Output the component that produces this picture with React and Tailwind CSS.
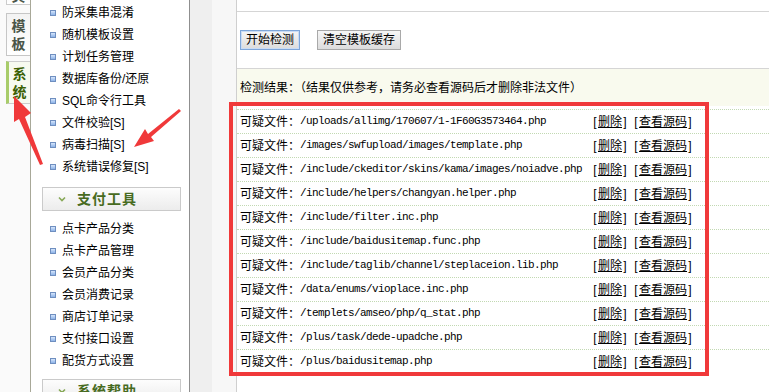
import React from "react";

const cjk = { fontFamily: '"Liberation Sans", "Noto Sans CJK SC", sans-serif' };
const mono = { fontFamily: '"Liberation Mono", "Noto Sans CJK SC", monospace' };

const sysItems = [
  "防采集串混淆",
  "随机模板设置",
  "计划任务管理",
  "数据库备份/还原",
  "SQL命令行工具",
  "文件校验[S]",
  "病毒扫描[S]",
  "系统错误修复[S]",
];

const payItems = [
  "点卡产品分类",
  "点卡产品管理",
  "会员产品分类",
  "会员消费记录",
  "商店订单记录",
  "支付接口设置",
  "配货方式设置",
];

const files = [
  "/uploads/allimg/170607/1-1F60G3573464.php",
  "/images/swfupload/images/template.php",
  "/include/ckeditor/skins/kama/images/noiadve.php",
  "/include/helpers/changyan.helper.php",
  "/include/filter.inc.php",
  "/include/baidusitemap.func.php",
  "/include/taglib/channel/steplaceion.lib.php",
  "/data/enums/vioplace.inc.php",
  "/templets/amseo/php/q_stat.php",
  "/plus/task/dede-upadche.php",
  "/plus/baidusitemap.php",
];

function MenuItem({ children }) {
  return (
    <li className="h-[22px] flex items-center pl-[19px] gap-[6px] text-[12px] text-black">
      <span className="w-[6px] h-[6px] border border-[#6f8fc0] bg-linear-to-b from-[#d6e6fb] to-[#8db3e8] shrink-0" />
      <span>{children}</span>
    </li>
  );
}

function SectionHead({ title, className = "" }) {
  return (
    <div
      className={
        "ml-[11px] w-[139px] h-[24px] border border-[#cacaca] bg-linear-to-b from-[#fdfdfd] to-[#ececec] flex items-center " +
        className
      }
    >
      <svg width="8" height="6" viewBox="0 0 8 6" className="ml-[15px]">
        <path d="M1 1.5 L4 4.5 L7 1.5" fill="none" stroke="#86a856" strokeWidth="1.6" />
      </svg>
      <span className="ml-[11px] text-[14px] font-bold text-[#476b1f] tracking-[1px]">{title}</span>
    </div>
  );
}

function Btn({ children, focused }) {
  return (
    <button
      type="button"
      className={[
        "h-[20px] px-[5px] text-[12px] leading-none text-black bg-linear-to-b from-[#f6f6f6] to-[#dcdcdc]",
        focused ? "border border-[#7ea6da] shadow-[inset_0_0_0_1px_#c9dcf5]" : "border border-[#a9a9a9]",
      ].join(" ")}
    >
      {children}
    </button>
  );
}

function Link({ children }) {
  return (
    <span className="inline-flex items-center">
      <span className="inline-block w-[6px] text-center">[</span>
      <span className="underline">{children}</span>
      <span className="inline-block w-[6px] text-center">]</span>
    </span>
  );
}

function Arrows() {
  return (
    <svg className="absolute inset-0 pointer-events-none" width="769" height="392" viewBox="0 0 769 392">
      {/* arrow toward the 系统 tab */}
      <polygon points="14,96 31,113 25,117 43,164 40,165 19,119 14,122" fill="#f0393a" />
      {/* arrow toward 病毒扫描 */}
      <polygon points="134,147 145,129 148,134 179,109 181,111 151,137 154,141" fill="#f0393a" />
    </svg>
  );
}

export default function App() {
  return (
    <div className="relative w-[769px] h-[392px] overflow-hidden flex bg-white" style={cjk}>
      {/* tab column */}
      <div className="w-[31px] shrink-0 bg-[#fafafa] border-r border-[#a8a898] flex flex-col items-end">
        <div className="-mt-[20px] w-[24px] h-[25px] border border-r-0 border-[#cccccc] bg-linear-to-b from-[#f0f0f0] to-white flex items-end justify-center text-[14px] font-bold text-[#4a5548] leading-[16px]">
          其
        </div>
        <div className="mt-[8px] w-[24px] h-[43px] border border-r-0 border-[#c6c6c6] bg-linear-to-b from-[#f3f3f3] to-white flex flex-col items-center justify-center text-[14px] font-bold text-[#4a5548] leading-[18px]">
          <span>模</span>
          <span>板</span>
        </div>
        <div className="mt-[5px] w-[24px] h-[43px] border border-r-0 border-l-[3px] border-[#cccccc] border-l-[#a8cc6a] bg-[#f7faf0] flex flex-col items-center justify-center text-[14px] font-bold text-[#3b6104] leading-[18px]">
          <span>系</span>
          <span>统</span>
        </div>
      </div>

      {/* menu */}
      <div className="w-[159px] shrink-0 bg-white border-r border-[#8f8f8f]">
        <ul className="mt-[2px]">
          {sysItems.map((t) => (
            <MenuItem key={t}>{t}</MenuItem>
          ))}
        </ul>
        <SectionHead title="支付工具" className="mt-[9px]" />
        <ul className="mt-[7px]">
          {payItems.map((t) => (
            <MenuItem key={t}>{t}</MenuItem>
          ))}
        </ul>
        <SectionHead title="系统帮助" className="mt-[7px]" />
      </div>

      {/* gutter strips */}
      <div className="w-[22px] shrink-0 bg-[#efefef]" />
      <div className="w-[25px] shrink-0 bg-[#f7f7f7] border-r border-[#cfcfcf]" />

      {/* content */}
      <div className="flex-1 flex flex-col">
        <div className="h-[12px] border-b border-[#d5d5d5]" />
        <div className="h-[57px] border-b border-[#d5d5d5] flex items-center gap-[17px] pl-[3px]">
          <Btn focused>开始检测</Btn>
          <Btn>清空模板缓存</Btn>
        </div>
        <div className="h-[37px] bg-[#f9faee] flex items-center pl-[3px] text-[12px] text-black">
          检测结果：（结果仅供参考，请务必查看源码后才删除非法文件）
        </div>
        <div className="h-[3px]" />
        {files.map((f) => (
          <div key={f} className="h-[24px] border-t border-dotted border-[#c2d9b2] flex items-center text-[12px] text-black">
            <div className="w-[352px] pl-[3px] flex items-center whitespace-nowrap">
              <span>可疑文件：</span>
              <span className="text-[11px] tracking-[-0.6px]" style={mono}>
                {f}
              </span>
            </div>
            <div className="pl-[3px] whitespace-nowrap flex items-center gap-[5px]">
              <Link>删除</Link>
              <Link>查看源码</Link>
            </div>
          </div>
        ))}
      </div>

      {/* red annotation box */}
      <div className="absolute left-[229px] top-[102px] w-[480px] h-[274px] border-[4px] border-[#f0393a] pointer-events-none" />
      <Arrows />
    </div>
  );
}
